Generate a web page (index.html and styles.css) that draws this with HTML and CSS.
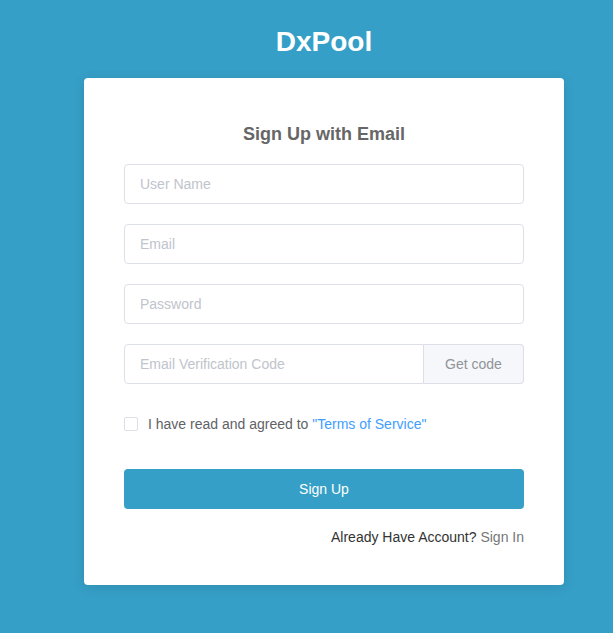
FILE: index.html
```
<!DOCTYPE html>
<html>
<head>
<meta charset="utf-8">
<link rel="stylesheet" href="styles.css">
</head>
<body>
<div class="page">
  <h1 class="brand">DxPool</h1>
  <div class="card">
    <h2 class="heading">Sign Up with Email</h2>
    <form class="form">
      <div class="field"><input class="input" type="text" placeholder="User Name"></div>
      <div class="field"><input class="input" type="text" placeholder="Email"></div>
      <div class="field"><input class="input" type="password" placeholder="Password"></div>
      <div class="field group">
        <input class="input group-input" type="text" placeholder="Email Verification Code">
        <button type="button" class="append">Get code</button>
      </div>
      <label class="agree">
        <span class="box"></span>
        <span class="agree-text">I have read and agreed to <a class="link" href="#">"Terms of Service"</a></span>
      </label>
      <button type="button" class="submit">Sign Up</button>
      <div class="signin">Already Have Account? <a class="signin-link" href="#">Sign In</a></div>
    </form>
  </div>
</div>
</body>
</html>
```
FILE: styles.css
```
html, body {
  margin: 0;
  padding: 0;
  background: #369fc7;
  font-family: "Liberation Sans", Arial, Helvetica, sans-serif;
  height: 100%;
  overflow: hidden;
}
.page {
  width: 480px;
  margin-left: 84px;
  padding-top: 26px;
}
.brand {
  margin: 0;
  text-align: center;
  color: #fff;
  font-size: 28px;
  line-height: 32px;
  font-weight: bold;
}
.card {
  margin-top: 20px;
  background: #fff;
  border-radius: 4px;
  box-shadow: 0 2px 12px rgba(0, 0, 0, 0.12);
  padding: 44px 40px 38px;
}
.heading {
  margin: 0 0 18px;
  text-align: center;
  font-size: 18px;
  line-height: 24px;
  font-weight: bold;
  color: #666;
}
.form {
  display: flex;
  flex-direction: column;
}
.field {
  margin-bottom: 20px;
  display: flex;
}
.field:nth-child(4) { margin-bottom: 30px; }
.input {
  box-sizing: border-box;
  width: 100%;
  height: 40px;
  border: 1px solid #dcdfe6;
  border-radius: 4px;
  padding: 0 15px;
  font-family: inherit;
  font-size: 14px;
  color: #606266;
  outline: none;
  background: #fff;
}
.input::placeholder { color: #c0c4cc; }
.group-input {
  flex: 1;
  border-top-right-radius: 0;
  border-bottom-right-radius: 0;
}
.append {
  box-sizing: border-box;
  width: 100px;
  height: 40px;
  flex: none;
  border: 1px solid #dcdfe6;
  border-left: 0;
  border-radius: 0 4px 4px 0;
  background: #f5f7fa;
  color: #909399;
  font-family: inherit;
  font-size: 14px;
  padding: 0;
}
.agree {
  display: flex;
  align-items: center;
  height: 20px;
  font-size: 14px;
  color: #606266;
}
.box {
  box-sizing: border-box;
  width: 14px;
  height: 14px;
  border: 1px solid #dcdfe6;
  border-radius: 2px;
  margin-right: 10px;
  background: #fff;
}
.link {
  color: #409eff;
  text-decoration: none;
}
.submit {
  margin-top: 35px;
  height: 40px;
  border: 0;
  border-radius: 4px;
  background: #369fc7;
  color: #fff;
  font-family: inherit;
  font-size: 14px;
}
.signin {
  margin-top: 18px;
  text-align: right;
  font-size: 14px;
  line-height: 20px;
  color: #333;
}
.signin-link {
  color: #777;
  text-decoration: none;
}
```
